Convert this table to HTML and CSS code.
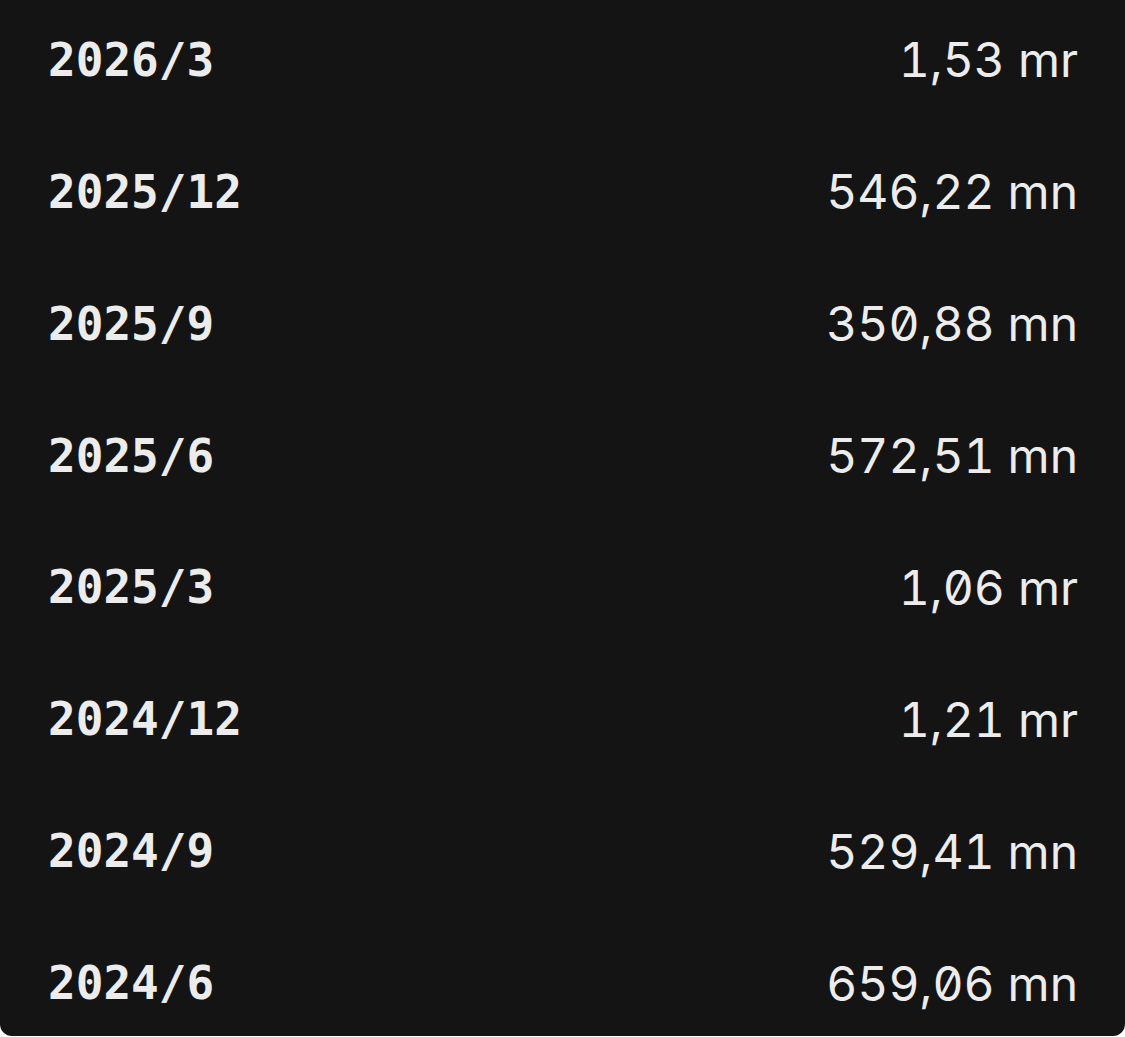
FILE: index.html
```html
<!DOCTYPE html>
<html>
<head>
<meta charset="utf-8">
<meta name="viewport" content="width=device-width, initial-scale=1">
<title>Quarterly figures</title>
<link rel="stylesheet" href="styles.css">
</head>
<body>
<div class="panel">
    <div class="row"><span class="period">2026/3</span><span class="amount">1,53 mr</span></div>
    <div class="row"><span class="period">2025/12</span><span class="amount">546,22 mn</span></div>
    <div class="row"><span class="period">2025/9</span><span class="amount">350,88 mn</span></div>
    <div class="row"><span class="period">2025/6</span><span class="amount">572,51 mn</span></div>
    <div class="row"><span class="period">2025/3</span><span class="amount">1,06 mr</span></div>
    <div class="row"><span class="period">2024/12</span><span class="amount">1,21 mr</span></div>
    <div class="row"><span class="period">2024/9</span><span class="amount">529,41 mn</span></div>
    <div class="row"><span class="period">2024/6</span><span class="amount">659,06 mn</span></div>
</div>
</body>
</html>
```
FILE: styles.css
```css
/* Reset */
* { margin: 0; padding: 0; box-sizing: border-box; }

body {
    background: #ffffff;
}

/* Panel */
.panel {
    width: 1125px;
    height: 1036px;
    background: #141414;
    border-radius: 0 0 12px 12px;
    padding: 30px 47px 23px 48px;
    display: flex;
    flex-direction: column;
    gap: 72px;
}

.row {
    height: 60px;
    display: flex;
    align-items: center;
    justify-content: space-between;
    color: #ececec;
}

.period {
    font-family: "DejaVu Sans Mono", "Liberation Mono", monospace;
    font-weight: bold;
    font-size: 46px;
}

.amount {
    font-family: Inter, "Noto Sans", sans-serif;
    font-size: 48px;
    font-feature-settings: "tnum", "zero";
}
```
